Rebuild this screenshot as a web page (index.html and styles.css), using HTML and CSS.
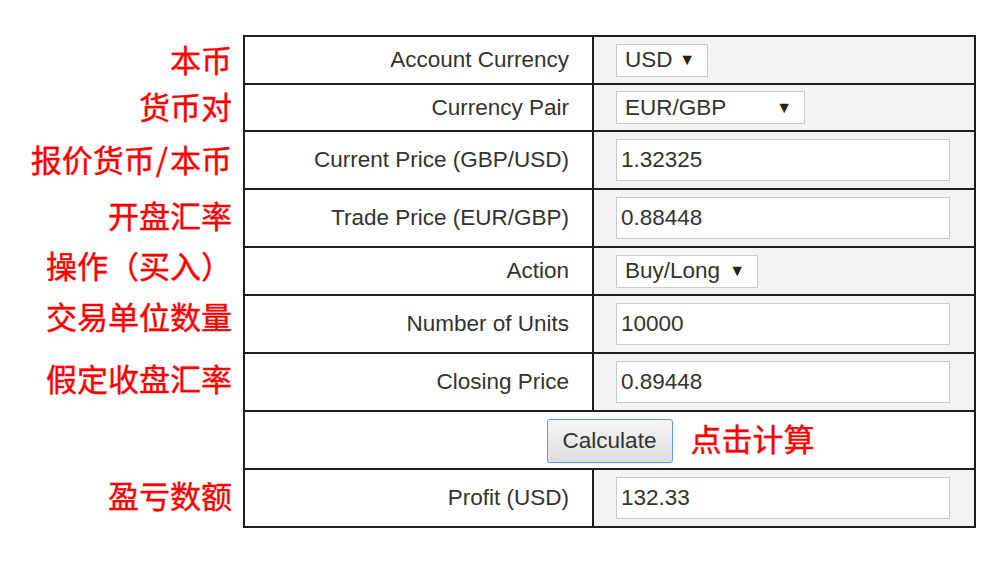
FILE: index.html
```html
<!DOCTYPE html>
<html lang="zh-CN">
<head>
<meta charset="utf-8">
<title>Profit Calculator</title>
<link rel="stylesheet" href="styles.css">
</head>
<body>
<div class="page">
  <table class="calc">
    <tbody>
      <tr class="r-sel">
        <td class="note"><span class="lab">本币</span></td>
        <td class="k"><div class="cell h46">Account Currency</div></td>
        <td class="v"><div class="cell h46"><span class="select w-usd"><span>USD</span><span class="arrow">▼</span></span></div></td>
      </tr>
      <tr>
        <td class="note"><span class="lab nb2">货币对</span></td>
        <td class="k"><div class="cell h45">Currency Pair</div></td>
        <td class="v"><div class="cell h45"><span class="select w-pair"><span>EUR/GBP</span><span class="arrow">▼</span></span></div></td>
      </tr>
      <tr>
        <td class="note"><span class="lab nb2">报价货币<span class="slash">/</span>本币</span></td>
        <td class="k"><div class="cell h56">Current Price (GBP/USD)</div></td>
        <td class="v"><div class="cell h56"><span class="input">1.32325</span></div></td>
      </tr>
      <tr>
        <td class="note"><span class="lab nb8">开盘汇率</span></td>
        <td class="k"><div class="cell h56">Trade Price (EUR/GBP)</div></td>
        <td class="v"><div class="cell h56"><span class="input">0.88448</span></div></td>
      </tr>
      <tr>
        <td class="note"><span class="lab nb14">操作（买入）</span></td>
        <td class="k"><div class="cell h46">Action</div></td>
        <td class="v"><div class="cell h46"><span class="select w-act"><span>Buy/Long</span><span class="arrow">▼</span></span></div></td>
      </tr>
      <tr>
        <td class="note"><span class="lab nb18">交易单位数量</span></td>
        <td class="k"><div class="cell h56">Number of Units</div></td>
        <td class="v"><div class="cell h56"><span class="input">10000</span></div></td>
      </tr>
      <tr>
        <td class="note"><span class="lab nb10">假定收盘汇率</span></td>
        <td class="k"><div class="cell h56">Closing Price</div></td>
        <td class="v"><div class="cell h56"><span class="input">0.89448</span></div></td>
      </tr>
      <tr>
        <td class="note"></td>
        <td class="btn-cell" colspan="2">
          <div class="cell h56 center">
            <span class="btn-wrap">
              <button class="btn" type="button">Calculate</button>
              <span class="lab side">点击计算</span>
            </span>
          </div>
        </td>
      </tr>
      <tr>
        <td class="note"><span class="lab nb8">盈亏数额</span></td>
        <td class="k"><div class="cell h56">Profit (USD)</div></td>
        <td class="v"><div class="cell h56"><span class="input">132.33</span></div></td>
      </tr>
    </tbody>
  </table>
</div>
</body>
</html>
```
FILE: styles.css
```css
html, body {
  margin: 0;
  padding: 0;
  background: #ffffff;
}

.page {
  padding-top: 35px;
}

.calc {
  border-collapse: collapse;
  font-family: "Liberation Sans", Arial, sans-serif;
  font-size: 22.5px;
  color: #333333;
}

.calc td {
  padding: 0;
  vertical-align: middle;
}

.calc td.k,
.calc td.v,
.calc td.btn-cell {
  border: 2px solid #1e1e1e;
}

.calc td.k {
  width: 347px;
  background: #ffffff;
  text-align: right;
}

.calc td.k .cell {
  padding-right: 23px;
  justify-content: flex-end;
}

.calc td.v {
  width: 380px;
  background: #f4f4f4;
}

.calc td.v .cell {
  padding-left: 22px;
}

.calc td.btn-cell {
  background: #ffffff;
}

.cell {
  display: flex;
  align-items: center;
}

.cell.center {
  justify-content: center;
}

.h45 { height: 45px; }
.h46 { height: 46px; }
.h56 { height: 56px; }

/* red annotations */
.note {
  width: 232px;
  padding-right: 11px !important;
  text-align: right;
}

.lab {
  display: inline-block;
  font-family: "Noto Sans CJK SC", "Noto Sans", sans-serif;
  font-size: 31px;
  font-weight: 400;
  line-height: 1;
  color: #ff0000;
  white-space: nowrap;
  -webkit-text-stroke: 0.4px #ff0000;
}

.slash {
  margin: 0 2px 0 1px;
}

.nb2 { padding-bottom: 2px; }
.nb8 { padding-bottom: 8px; }
.nb10 { padding-bottom: 10px; }
.nb14 { padding-bottom: 14px; }
.nb18 { padding-bottom: 18px; }

/* selects */
.select {
  box-sizing: border-box;
  display: inline-flex;
  align-items: center;
  justify-content: space-between;
  height: 33px;
  padding: 0 12px 0 8px;
  background: #ffffff;
  border: 1px solid #cccccc;
}

.arrow {
  font-size: 16px;
  color: #222222;
}

.w-usd { width: 92px; }
.w-pair { width: 189px; }
.w-act { width: 142px; }

/* inputs */
.input {
  box-sizing: border-box;
  display: flex;
  align-items: center;
  width: 334px;
  height: 42px;
  padding-left: 4px;
  background: #ffffff;
  border: 1px solid #c9c9c9;
}

/* button */
.btn-wrap {
  position: relative;
  display: inline-block;
}

.btn {
  display: block;
  box-sizing: border-box;
  width: 126px;
  height: 44px;
  margin-top: 1px;
  padding: 0;
  font-family: "Liberation Sans", Arial, sans-serif;
  font-size: 22.5px;
  color: #333333;
  background: linear-gradient(#f6f6f6, #dddddd);
  border: 1px solid #5b9be6;
  border-radius: 3px;
}

.side {
  position: absolute;
  left: 144px;
  top: 50%;
  transform: translateY(-58%);
}
```
